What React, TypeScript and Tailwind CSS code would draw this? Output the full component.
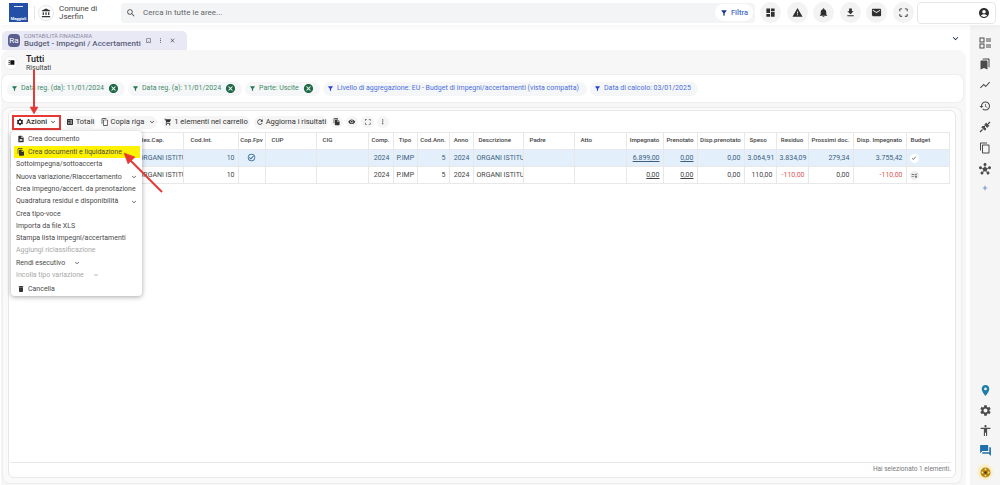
import React from "react";
import {
  MdAccountBalance, MdSearch, MdFilterAlt, MdDashboard, MdWarning, MdNotifications, MdFileDownload, MdMail,
  MdCropFree, MdAccountCircle, MdBookmarkBorder, MdMoreVert, MdClose, MdKeyboardArrowDown, MdCancel, MdSettings,
  MdCalculate, MdContentCopy, MdShoppingCart, MdRefresh, MdFileCopy, MdVisibility, MdDescription, MdDelete,
  MdBookmarks, MdShowChart, MdHistory, MdHub, MdAdd, MdPlace, MdAccessibility,
  MdForum, MdViewSidebar, MdCheckCircleOutline, MdCheck, MdOutlineRule,
} from "react-icons/md";

const topIcons = [MdDashboard, MdWarning, MdNotifications, MdFileDownload, MdMail, MdCropFree];

const filters = [
  { label: "Data reg. (da): 11/01/2024", green: true, w: "w-[118px]" },
  { label: "Data reg. (a): 11/01/2024", green: true, w: "w-[114px]" },
  { label: "Parte: Uscite", green: true, w: "w-[75px]" },
  { label: "Livello di aggregazione: EU - Budget di impegni/accertamenti (vista compatta)", green: false, w: "w-[264px]" },
  { label: "Data di calcolo: 03/01/2025", green: false, w: "w-[108px]" },
];

const columns = [
  { label: "", w: "w-[125px]", align: "text-left" },
  { label: "Res.Cap.", w: "w-[48px]", align: "text-left pl-[4px]" },
  { label: "Cod.Int.", w: "w-[55px]", align: "text-left pl-[7px]" },
  { label: "Cop.Fpv", w: "w-[27px]", align: "text-center" },
  { label: "CUP", w: "w-[51px]", align: "text-left pl-[6px]" },
  { label: "CIG", w: "w-[52px]", align: "text-left pl-[6px]" },
  { label: "Comp.", w: "w-[25px]", align: "text-center" },
  { label: "Tipo", w: "w-[24px]", align: "text-center" },
  { label: "Cod.Ann.", w: "w-[32px]", align: "text-center" },
  { label: "Anno", w: "w-[24px]", align: "text-center" },
  { label: "Descrizione", w: "w-[50px]", align: "text-left pl-[5px]" },
  { label: "Padre", w: "w-[51px]", align: "text-left pl-[6px]" },
  { label: "Atto", w: "w-[52px]", align: "text-left pl-[6px]" },
  { label: "Impegnato", w: "w-[37px]", align: "text-center" },
  { label: "Prenotato", w: "w-[34px]", align: "text-center" },
  { label: "Disp.prenotato", w: "w-[47px]", align: "text-center" },
  { label: "Speso", w: "w-[32px]", align: "text-left pl-[5px]" },
  { label: "Residuo", w: "w-[32px]", align: "text-center" },
  { label: "Prossimi doc.", w: "w-[45px]", align: "text-center" },
  { label: "Disp. Impegnato", w: "w-[53px]", align: "text-center" },
  { label: "Budget", w: "w-[43px]", align: "text-left pl-[4px]" },
];

const rows = [
  { selected: true, imp: "6.899,00", speso: "3.064,91", residuo: "3.834,09", prossimi: "279,34", disp: "3.755,42", neg: false },
  { selected: false, imp: "0,00", speso: "110,00", residuo: "-110,00", prossimi: "0,00", disp: "-110,00", neg: true },
];

const menuItems = [
  { label: "Sottoimpegna/sottoaccerta" },
  { label: "Nuova variazione/Riaccertamento", arrow: "ml-auto mr-1" },
  { label: "Crea impegno/accert. da prenotazione" },
  { label: "Quadratura residui e disponibilità", arrow: "ml-auto mr-1" },
  { label: "Crea tipo-voce" },
  { label: "Importa da file XLS" },
  { label: "Stampa lista impegni/accertamenti" },
  { label: "Aggiungi riclassificazione", off: true },
  { label: "Rendi esecutivo", arrow: "ml-2" },
  { label: "Incolla tipo variazione", arrow: "ml-2", off: true },
];

function ListIcon() {
  return (
    <svg width="12" height="12" viewBox="0 0 12 12" fill="none" stroke="#4b4b4b" strokeWidth="1">
      <rect x="1" y="1" width="4" height="4" />
      <rect x="1" y="7" width="4" height="4" />
      <path d="M7 2h5M7 4h5M7 8h5M7 10h5" />
    </svg>
  );
}

function PlugIcon() {
  return (
    <svg width="12" height="12" viewBox="0 0 12 12" fill="#4b4b4b" stroke="#4b4b4b">
      <path d="M1 11l2.5-2.5M9 3l2-2" strokeWidth="1.2" />
      <path d="M2.8 6.2l3 3 1.2-1.2-3-3z" />
      <path d="M5.6 3.8l2.6 2.6 1.6-1.8-2.4-2.4z" />
      <path d="M5 6l1-1" strokeWidth="1" />
    </svg>
  );
}

function TopBar() {
  return (
    <header className="h-[25px] flex items-center bg-white shadow-[0_2px_6px_rgba(0,0,0,0.04)] relative z-10">
      <div className="ml-[9px] w-[19px] h-[19px] bg-[#234fa6] flex flex-col items-center justify-between pt-[3px] pb-[1px]">
        <div className="w-[9px] h-[1px] bg-[#dfe6f5]" />
        <div className="text-white text-[4px] leading-none font-bold">Maggioli</div>
      </div>
      <div className="ml-[6px] w-px h-[14px] bg-[#e5e7eb]" />
      <div className="ml-[3px] w-[16px] h-[16px] rounded-full border border-[#e5e7eb] flex items-center justify-center">
        <MdAccountBalance className="text-[10px] text-[#333]" />
      </div>
      <div className="ml-[5px] w-[56px] text-[8px] leading-[8px] text-[#444]">Comune di<br />Jserfin</div>
      <div className="ml-[6px] w-[634px] h-[20px] bg-[#f3f4f6] rounded-[4px] flex items-center pl-[5px] pr-[2px]">
        <MdSearch className="text-[10px] text-[#555]" />
        <span className="ml-[7px] text-[8px] text-[#666]">Cerca in tutte le aree...</span>
        <div className="ml-auto w-[38px] h-[17px] bg-white rounded-full flex items-center justify-center gap-[3px]">
          <MdFilterAlt className="text-[8px] text-[#1e3a8a]" />
          <span className="text-[7.5px] font-medium text-[#4a6fc4]">Filtra</span>
        </div>
      </div>
      <div className="ml-[5px] flex gap-[5.5px]">
        {topIcons.map((Icon, i) => (
          <div key={i} className="w-[21px] h-[21px] rounded-full bg-[#f3f3f3] flex items-center justify-center">
            <Icon className="text-[11px] text-[#2f2f2f]" />
          </div>
        ))}
      </div>
      <div className="ml-[3px] w-[79px] h-[22px] border border-[#e5e7eb] rounded-[4px] flex items-center justify-end pr-[5px]">
        <MdAccountCircle className="text-[12px] text-[#2f2f2f]" />
      </div>
    </header>
  );
}

function Rail() {
  return (
    <aside className="w-[30px] bg-[#f5f5f5] flex flex-col items-center pt-[12px] pb-[5px] ml-[4px]">
      <div className="flex flex-col items-center gap-[9px] text-[12px] text-[#4b4b4b]">
        <ListIcon />
        <MdBookmarks />
        <MdShowChart />
        <MdHistory />
        <PlugIcon />
        <MdContentCopy />
        <MdHub />
        <MdAdd className="text-[8px] text-[#2c5fa8]" />
      </div>
      <div className="mt-auto flex flex-col items-center gap-[7px]">
        <MdPlace className="text-[13px] text-[#1f7ea8]" />
        <MdSettings className="text-[13px] text-[#4b4b4b]" />
        <MdAccessibility className="text-[13px] text-[#4b4b4b]" />
        <MdForum className="text-[13px] text-[#1f6fa8]" />
        <div className="w-[16px] h-[16px] rounded-full bg-[#fbeecb] flex items-center justify-center">
          <svg width="11" height="11" viewBox="0 0 12 12">
            <circle cx="6" cy="6" r="5.5" fill="#b8860b" />
            <circle cx="6" cy="6" r="1.3" fill="#4a3a10" />
            <circle cx="6" cy="2.6" r="1" fill="#f8e6b0" />
            <circle cx="6" cy="9.4" r="1" fill="#f8e6b0" />
            <circle cx="2.6" cy="6" r="1" fill="#f8e6b0" />
            <circle cx="9.4" cy="6" r="1" fill="#f8e6b0" />
          </svg>
        </div>
      </div>
    </aside>
  );
}

function ActionMenu() {
  return (
    <div className="absolute left-[2px] top-[20px] w-[131px] h-[165px] bg-white rounded-[4px] shadow-[0_1px_5px_rgba(0,0,0,0.35)] z-20 pt-[2px] text-[7px] text-[#4a4a4a]">
      <div className="h-[12px] pl-[5px] flex items-center gap-[2px]">
        <MdDescription className="text-[8px] w-[10px] text-[#333]" />
        <span>Crea documento</span>
      </div>
      <div className="mt-[1px] ml-[3px] mr-[2px] h-[12px] bg-[#fff200] pl-[2px] flex items-center gap-[2px]">
        <MdFileCopy className="text-[8px] w-[10px] text-[#333]" />
        <span>Crea documenti e liquidazione</span>
      </div>
      <div className="mt-[0.5px]">
        {menuItems.map((item) => (
          <div key={item.label} className={`h-[12.3px] pl-[5px] flex items-center whitespace-nowrap ${item.off ? "text-[#a8a8a8]" : ""}`}>
            <span>{item.label}</span>
            {item.arrow && <MdKeyboardArrowDown className={`text-[8px] ${item.arrow}`} />}
          </div>
        ))}
      </div>
      <div className="h-[13px] mt-[1px] pl-[5px] flex items-center gap-[2px]">
        <MdDelete className="text-[8px] w-[10px] text-[#333]" />
        <span>Cancella</span>
      </div>
    </div>
  );
}

function Toolbar() {
  return (
    <div className="h-[20px] flex items-center pl-[2px] text-[7.5px] text-[#333]">
      <div className="w-[49px] h-[15px] border-2 border-[#e53935] flex items-center pl-[2px]">
        <MdSettings className="text-[8px] text-[#222]" />
        <span className="ml-[2px] font-medium">Azioni</span>
        <MdKeyboardArrowDown className="text-[8px] ml-auto mr-[2px]" />
      </div>
      <div className="ml-[3px] w-[32px] h-[13px] bg-[#f5f5f5] rounded-full flex items-center justify-center gap-[2px]">
        <MdCalculate className="text-[8px]" />Totali
      </div>
      <div className="ml-[4px] w-[57px] h-[13px] bg-[#f5f5f5] rounded-full flex items-center justify-center gap-[2px]">
        <MdContentCopy className="text-[8px]" />Copia riga
        <MdKeyboardArrowDown className="text-[8px] ml-[2px]" />
      </div>
      <div className="ml-[5px] w-[88px] h-[13px] bg-[#f5f5f5] rounded-full flex items-center justify-center gap-[2px]">
        <MdShoppingCart className="text-[8px]" />1 elementi nel carrello
      </div>
      <div className="ml-[4px] w-[74px] h-[13px] bg-[#f5f5f5] rounded-full flex items-center justify-center gap-[2px]">
        <MdRefresh className="text-[8px]" />Aggiorna i risultati
      </div>
      <div className="ml-[2px] flex gap-[3px]">
        {[MdFileCopy, MdVisibility, MdCropFree, MdMoreVert].map((Icon, i) => (
          <div key={i} className="w-[12.5px] h-[12.5px] rounded-full bg-[#f5f5f5] flex items-center justify-center">
            <Icon className="text-[7.5px]" />
          </div>
        ))}
      </div>
    </div>
  );
}

function DataTable() {
  const cell = "border-r border-[#e8e8e8] px-[3px] whitespace-nowrap overflow-hidden";
  return (
    <table className="table-fixed w-[939px] border-collapse text-[7px]">
      <thead>
        <tr className="h-[17px] border-y border-[#e8e8e8]">
          {columns.map((c) => (
            <th key={c.label} className={`${c.w} border-r border-[#e8e8e8] whitespace-nowrap overflow-hidden ${c.align} font-medium text-[6.2px] text-[#444]`}>{c.label}</th>
          ))}
        </tr>
      </thead>
      <tbody>
        {rows.map((r) => {
          const neg = r.neg ? "text-[#e25555]" : "";
          return (
            <tr key={r.imp} className={`h-[17px] border-b border-[#e8e8e8] ${r.selected ? "bg-[#e3f0fb] text-[#3f5f7f]" : "bg-white text-[#444]"}`}>
              <td className={cell} />
              <td className={`${cell} pl-[3px]`}>ORGANI ISTITU</td>
              <td className={`${cell} text-right`}>10</td>
              <td className={`${cell} text-center`}>
                {r.selected && <MdCheckCircleOutline className="inline text-[9px] text-[#2c5f8f]" />}
              </td>
              <td className={cell} />
              <td className={cell} />
              <td className={`${cell} text-right`}>2024</td>
              <td className={`${cell} text-center`}>P.IMP</td>
              <td className={`${cell} text-right`}>5</td>
              <td className={`${cell} text-right`}>2024</td>
              <td className={cell}>ORGANI ISTITU</td>
              <td className={cell} />
              <td className={cell} />
              <td className={`${cell} text-right underline`}>{r.imp}</td>
              <td className={`${cell} text-right underline`}>0,00</td>
              <td className={`${cell} text-right`}>0,00</td>
              <td className={`${cell} text-right`}>{r.speso}</td>
              <td className={`${cell} text-right ${neg}`}>{r.residuo}</td>
              <td className={`${cell} text-right`}>{r.prossimi}</td>
              <td className={`${cell} text-right ${neg}`}>{r.disp}</td>
              <td className={`${cell} pl-[3px]`}>
                <span className={`w-[9px] h-[9px] rounded-full flex items-center justify-center ${r.selected ? "bg-white" : "bg-[#eeeeee]"}`}>
                  {r.selected ? <MdCheck className="text-[6px] text-[#333]" /> : <MdOutlineRule className="text-[7px] text-[#444]" />}
                </span>
              </td>
            </tr>
          );
        })}
      </tbody>
    </table>
  );
}

export default function App() {
  return (
    <div className="w-[1000px] h-[485px] overflow-hidden bg-white relative font-['Roboto',sans-serif]">
      <TopBar />
      <div className="flex h-[460px]">
        <main className="w-[966px] flex flex-col">
          <div className="h-[25px] pl-[2px] pr-[6px] flex items-end relative">
            <div className="w-[185px] h-[19px] bg-[#e9e9f6] rounded-t-[5px] flex items-center pl-[6px]">
              <div className="w-[12px] h-[13px] rounded-[4px] bg-[#5b5f8f] text-white text-[8px] leading-none flex items-center justify-center">Ra</div>
              <div className="ml-[4px] w-[117px]">
                <div className="text-[5.5px] leading-[6px] text-[#8a8aa0]">CONTABILITÀ FINANZIARIA</div>
                <div className="text-[8px] leading-[9px] font-medium text-[#5a5f78] whitespace-nowrap">Budget - Impegni / Accertamenti</div>
              </div>
              <MdBookmarkBorder className="ml-[4px] text-[7px] text-[#555]" />
              <MdMoreVert className="ml-[5px] text-[7px] text-[#555]" />
              <MdClose className="ml-[5px] text-[7px] text-[#555]" />
            </div>
            <MdKeyboardArrowDown className="absolute right-[5px] top-[8px] text-[11px] text-[#1e2a50]" />
          </div>
          <div className="flex-1 ml-[1px] bg-[#f7f7f8] rounded-t-[8px] pr-[3px] pl-[1px] pb-[2px] flex flex-col">
            <div className="h-[25px] flex items-center pl-[2px]">
              <div className="w-[14px] h-[14px] rounded-full bg-white border border-[#eeeeee] flex items-center justify-center">
                <MdViewSidebar className="text-[7px] text-[#111] rotate-180" />
              </div>
              <div className="ml-[8px] mt-[1px]">
                <div className="text-[9px] leading-[10px] font-medium text-[#222]">Tutti</div>
                <div className="text-[7px] leading-[8px] text-[#444]">Risultati</div>
              </div>
            </div>
            <div className="h-[27px] bg-white rounded-[6px] shadow-[0_0_2px_rgba(0,0,0,0.12)] flex items-center gap-[3px] pl-[5px]">
              {filters.map((f) => (
                <div key={f.label} className={`${f.w} h-[14px] bg-[#f5f6f7] rounded-full flex items-center pl-[4px] pr-[6px] whitespace-nowrap`}>
                  <MdFilterAlt className={`text-[7px] shrink-0 ${f.green ? "text-[#1f7a50]" : "text-[#2a3fe0]"}`} />
                  <span className={`ml-[3px] text-[7px] ${f.green ? "text-[#3f8a6a]" : "text-[#4a6fe0]"}`}>{f.label}</span>
                  {f.green && <MdCancel className="ml-auto text-[11px] shrink-0 text-[#1f6a48]" />}
                </div>
              ))}
            </div>
            <div className="mt-[6px] flex-1 ml-[1px] mr-[2px] bg-[#fafafa] rounded-[6px] shadow-[0_0_2px_rgba(0,0,0,0.15)] px-[5px] pt-[2px] pb-[5px] flex">
              <div className="flex-1 bg-white border border-[#e8e8e8] rounded-[6px] relative pl-px pt-px flex flex-col">
                <Toolbar />
                <DataTable />
                <ActionMenu />
                <div className="mt-auto mr-[4px] h-[15px] border-t border-[#e8e8e8] flex items-center justify-end text-[6.5px] text-[#777]">Hai selezionato 1 elementi.</div>
              </div>
            </div>
          </div>
        </main>
        <Rail />
      </div>
      <svg className="absolute left-0 top-0 pointer-events-none z-30" width="200" height="210" viewBox="0 0 200 210">
        <g stroke="#e53935" strokeWidth="2" fill="#e53935">
          <line x1="34" y1="70" x2="34" y2="108" />
          <polygon points="30,107 38,107 34,114" strokeWidth="0.5" />
          <line x1="162" y1="192" x2="130" y2="160" />
          <polygon points="124,153 135,157 128,164" strokeWidth="0.5" />
        </g>
      </svg>
    </div>
  );
}
